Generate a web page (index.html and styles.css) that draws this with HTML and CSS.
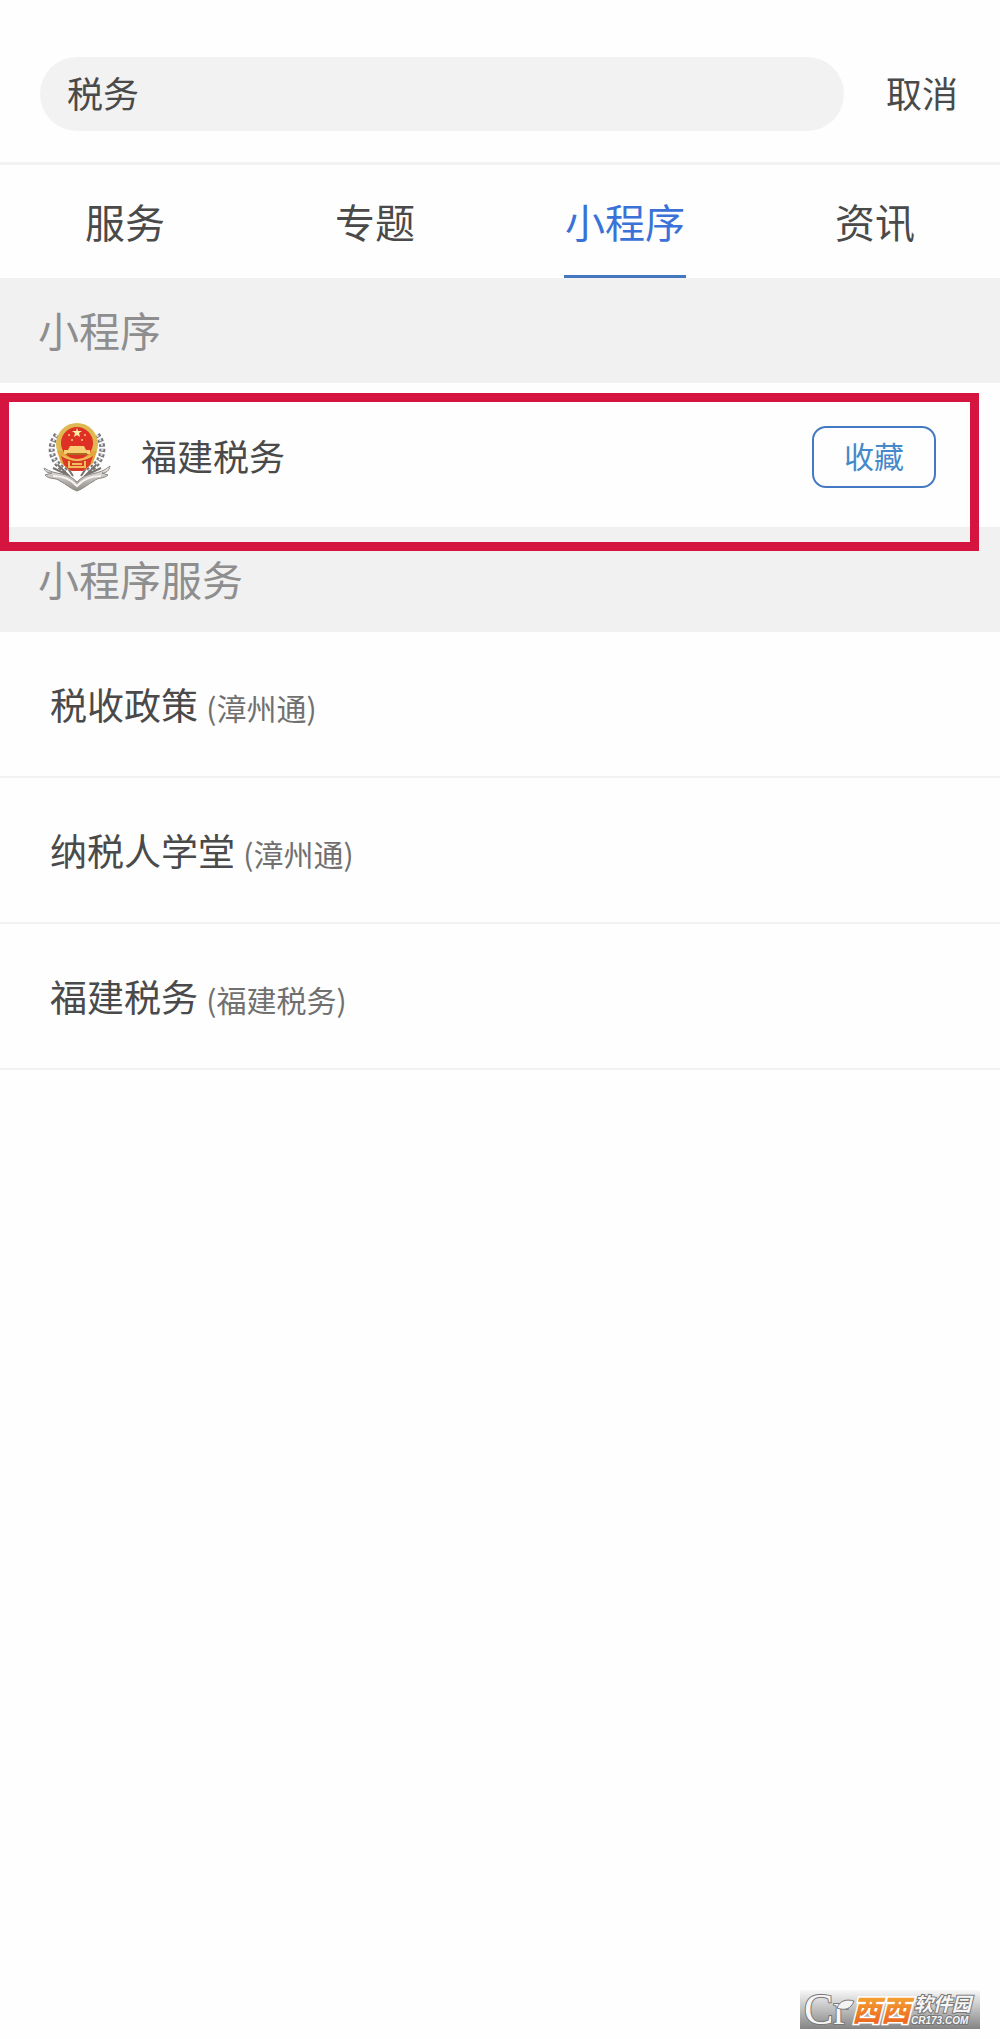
FILE: index.html
```html
<!DOCTYPE html>
<html lang="zh-CN">
<head>
<meta charset="UTF-8" />
<meta name="viewport" content="width=device-width, initial-scale=1.0" />
<title>搜索</title>
<link rel="stylesheet" href="styles.css">
</head>
<body>
    <form class="search-bar">
        <input class="search-input" type="text" value="税务" aria-label="搜索">
        <button class="cancel" type="button">取消</button>
    </form>

    <nav class="tabs">
        <a class="tab" href="#service"><span>服务</span></a>
        <a class="tab" href="#topic"><span>专题</span></a>
        <a class="tab active" href="#mini"><span>小程序</span></a>
        <a class="tab" href="#news"><span>资讯</span></a>
    </nav>

    <main>
        <h2 class="section-title">小程序</h2>
        <div class="app">
            <svg class="app-icon" viewBox="0 0 68 70" aria-hidden="true">
                <defs>
                    <linearGradient id="silver" x1="0" y1="0" x2="0" y2="1">
                        <stop offset="0" stop-color="#f4f3f1" />
                        <stop offset="1" stop-color="#8e8a86" />
                    </linearGradient>
                </defs>
                <!-- wreath -->
                <g fill="none" stroke="#77777d" stroke-width="6" stroke-dasharray="3 2">
                    <path d="M14 13C5 24 7 39 23 49" />
                    <path d="M54 13C63 24 61 39 45 49" />
                </g>
                <g fill="none" stroke="#e6e6e8" stroke-width="2" stroke-dasharray="2 3">
                    <path d="M14 13C5 24 7 39 23 49" />
                    <path d="M54 13C63 24 61 39 45 49" />
                </g>
                <g fill="none" stroke="#77736f" stroke-width="2">
                    <path d="M15 43l12 12M22 42l8 12M10 46l15 7M53 43L41 55M46 42l-8 12M58 46l-15 7" />
                </g>
                <!-- ribbon -->
                <path d="M1 46c12 8 23 3 33 14C44 49 56 54 67 44c-1 5-4 7-8 7l6 2c-4 4-10 2-14 6-6 3-11 8-17 10-6-2-11-7-17-10-5-4-11-1-15-6l7-2c-4 0-7-1-8-5z" fill="url(#silver)" stroke="#8c8781" />
                <path d="M10 54c9 0 17 2 24 10 7-8 15-10 24-10" fill="none" stroke="#f5f3f0" stroke-width="2" />
                <!-- emblem -->
                <circle cx="34" cy="22" r="21" fill="#dfb950" />
                <path d="M14 29l4 12 8 7h16l8-7 4-12z" fill="#e3a63d" />
                <circle cx="34" cy="21" r="16" fill="#df3026" />
                <path d="M34 6l1 3h4l-3 2 1 4-3-2-3 2 1-4-3-2h4z" fill="#fff0a8" />
                <g fill="#f8cd73">
                    <circle cx="26" cy="13" r="1" />
                    <circle cx="42" cy="13" r="1" />
                    <circle cx="29" cy="18" r="1" />
                    <circle cx="39" cy="18" r="1" />
                    <path d="M27 24h14l2 4h4v4H21v-4h4z" />
                </g>
                <path d="M24 31h20v2H24z" fill="#a86a1d" />
                <path d="M18 34q16 9 32 0l-3 9-7 6H28l-7-6z" fill="#d83a26" />
                <path d="M20 34q14 8 28 0M26 39v6h16v-6M29 42h10" fill="none" stroke="#f0bd5d" stroke-width="2" />
            </svg>
            <span class="app-name">福建税务</span>
            <button class="collect" type="button">收藏</button>
            <div class="highlight"></div>
        </div>

        <h2 class="section-title">小程序服务</h2>
        <ul class="services">
            <li><a href="#policy">税收政策 <small>(漳州通)</small></a></li>
            <li><a href="#school">纳税人学堂 <small>(漳州通)</small></a></li>
            <li><a href="#tax">福建税务 <small>(福建税务)</small></a></li>
        </ul>
    </main>

    <svg class="watermark" viewBox="0 0 180 39" role="img" aria-label="西西软件园 CR173.COM">
        <defs>
            <linearGradient id="plate" x1="0" y1="0" x2="0" y2="1">
                <stop offset="0" stop-color="#f8f8f8" />
                <stop offset="1" stop-color="#848484" />
            </linearGradient>
            <linearGradient id="orange" x1="0" y1="0" x2="0" y2="1">
                <stop offset="0" stop-color="#f6b63a" />
                <stop offset="1" stop-color="#ea5a1c" />
            </linearGradient>
        </defs>
        <path d="M0 0h180v39H0z" fill="url(#plate)" />
        <text class="mark-cr" x="4" y="34">Cr</text>
        <path d="M37 18c3-8 10-9 17-7-3 8-9 10-17 7z" fill="#f4f4f4" stroke="#777" />
        <text class="mark-xi" x="52" y="31">西西</text>
        <text class="mark-name" x="114" y="21">软件园</text>
        <text class="mark-site" x="111" y="34">CR173.COM</text>
    </svg>
</body>
</html>
```
FILE: styles.css
```css
* {
    box-sizing: border-box;
}
body {
    margin: 0;
    position: relative;
    min-height: 100vh;
    font-family: "Noto Sans CJK SC", sans-serif;
    background: #fefefe;
    color: #4a4a4a;
}
a {
    color: inherit;
    text-decoration: none;
}
button,
input {
    font-family: inherit;
    color: inherit;
}
.search-bar {
    display: flex;
    align-items: center;
    gap: 42px;
    padding: 57px 42px 31px 40px;
    border-bottom: 3px solid #f2f2f2;
}
.search-input {
    flex: 1;
    min-width: 0;
    height: 74px;
    padding: 0 27px 4px;
    border: none;
    border-radius: 37px;
    background: #f2f2f2;
    font-size: 36px;
}
.cancel {
    padding: 0 0 4px;
    border: none;
    background: none;
    font-size: 36px;
    line-height: 54px;
}
.tabs {
    display: flex;
}
.tab {
    flex: 1;
    text-align: center;
    font-size: 40px;
}
.tab span {
    display: inline-block;
    height: 113px;
    padding: 0 1px;
    line-height: 112px;
    vertical-align: top;
}
.tab.active {
    color: #3a72d8;
}
.tab.active span {
    border-bottom: 3px solid #4477bf;
}
.section-title {
    margin: 0;
    padding: 0 38px 2px;
    background: #f1f1f1;
    color: #8e8e8e;
    font-size: 41px;
    font-weight: normal;
    line-height: 103px;
}
.app {
    position: relative;
    display: flex;
    align-items: center;
    height: 144px;
    padding: 4px 64px 0 43px;
}
.app-icon {
    width: 68px;
    height: 70px;
}
.app-name {
    flex: 1;
    padding: 0 0 4px 30px;
    font-size: 36px;
}
.collect {
    width: 124px;
    height: 62px;
    padding: 0 0 4px;
    border: 2px solid #4479c4;
    border-radius: 14px;
    background: none;
    color: #4589cb;
    font-size: 30px;
    line-height: 54px;
}
/* red frame laid over the first result */
.highlight {
    position: absolute;
    top: 10px;
    left: 0;
    right: 21px;
    height: 158px;
    border: 9px solid #d51440;
    pointer-events: none;
}
.services {
    margin: 0;
    padding: 0;
    list-style: none;
}
.services li {
    border-bottom: 2px solid #f2f2f2;
}
.services a {
    display: block;
    padding: 0 50px;
    font-size: 37px;
    line-height: 144px;
}
.services small {
    color: #707070;
    font-size: 30px;
    line-height: 1;
}
.watermark {
    position: absolute;
    right: 20px;
    bottom: 10px;
    width: 180px;
    height: 39px;
    overflow: visible;
}
.watermark text {
    fill: #f6f6f6;
    stroke: #777;
    stroke-width: 2px;
    paint-order: stroke;
}
.watermark .mark-cr {
    font-family: "Liberation Serif", serif;
    font-size: 44px;
}
.watermark .mark-xi {
    fill: url(#orange);
    stroke: #fff;
    stroke-width: 3px;
    font-size: 29px;
    font-style: italic;
    font-weight: 900;
}
.watermark .mark-name {
    font-size: 19px;
    font-style: italic;
    font-weight: bold;
}
.watermark .mark-site {
    font-family: "Liberation Sans", sans-serif;
    font-size: 10px;
    font-style: italic;
    font-weight: bold;
}
```
